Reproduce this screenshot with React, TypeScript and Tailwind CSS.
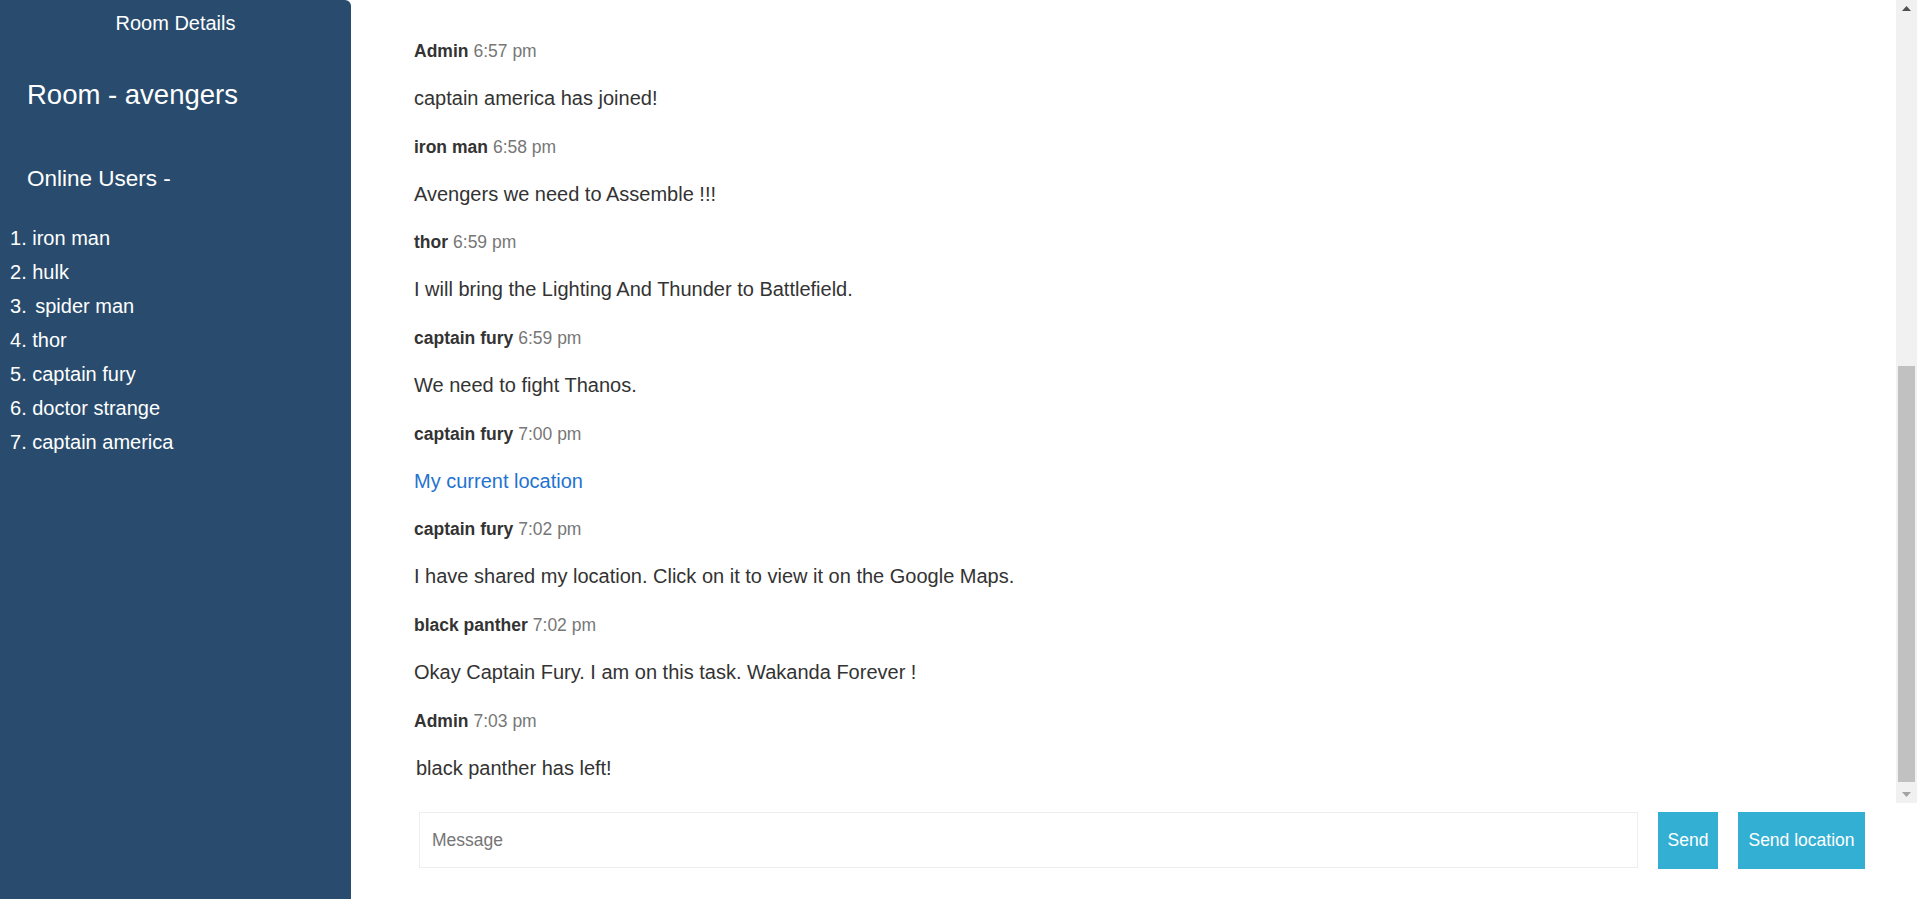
import { useState } from 'react';

const users = ['iron man', 'hulk', 'spider man', 'thor', 'captain fury', 'doctor strange', 'captain america'];

type Msg = { name: string; time: string; text: string; link?: boolean };

const messages: Msg[] = [
  { name: 'Admin', time: '6:57 pm', text: 'captain america has joined!' },
  { name: 'iron man', time: '6:58 pm', text: 'Avengers we need to Assemble !!!' },
  { name: 'thor', time: '6:59 pm', text: 'I will bring the Lighting And Thunder to Battlefield.' },
  { name: 'captain fury', time: '6:59 pm', text: 'We need to fight Thanos.' },
  { name: 'captain fury', time: '7:00 pm', text: 'My current location', link: true },
  { name: 'captain fury', time: '7:02 pm', text: 'I have shared my location. Click on it to view it on the Google Maps.' },
  { name: 'black panther', time: '7:02 pm', text: 'Okay Captain Fury. I am on this task. Wakanda Forever !' },
  { name: 'Admin', time: '7:03 pm', text: 'black panther has left!' },
];

function Sidebar() {
  return (
    <div className="w-[351px] shrink-0 bg-[#294c6e] text-white rounded-tr-[6px]">
      <div className="h-[46px] flex items-center justify-center text-[20px] leading-[24px] rounded-tr-[6px] rounded-br-[3px]">
        Room Details
      </div>
      <h2 className="mt-[33px] pl-[27px] text-[27.5px] leading-[32px]">Room - avengers</h2>
      <h3 className="mt-[54px] pl-[27px] text-[22.5px] leading-[28px]">Online Users -</h3>
      <ol className="mt-[28px] pl-[10px] text-[20px] leading-[34px]">
        {users.map((u, i) => (
          <li key={u}>
            {i + 1}. {i === 2 ? <span className="ml-[3px]">{u}</span> : u}
          </li>
        ))}
      </ol>
    </div>
  );
}

function Scrollbar() {
  return (
    <div className="w-[21px] shrink-0 bg-[#f1f1f1] flex flex-col items-center">
      <div className="h-[17px] flex items-center justify-center">
        <svg width="9" height="5" viewBox="0 0 9 5">
          <polygon points="4.5,0 9,5 0,5" fill="#505050" />
        </svg>
      </div>
      <div className="mt-[349px] w-[17px] h-[416px] bg-[#c1c1c1]" />
      <div className="mt-auto h-[17px] flex items-center justify-center">
        <svg width="9" height="5" viewBox="0 0 9 5">
          <polygon points="0,0 9,0 4.5,5" fill="#a3a3a3" />
        </svg>
      </div>
    </div>
  );
}

export default function App() {
  const [text, setText] = useState('');
  return (
    <div className="h-[899px] w-full flex overflow-hidden bg-white font-['Liberation_Sans',Arial,sans-serif]">
      <Sidebar />
      <div className="flex-1 flex flex-col min-w-0">
        <div className="h-[803px] flex shrink-0">
          <div className="flex-1 pl-[63px] pt-[39px] text-[#333]">
            {messages.map((m, i) => (
              <div key={i} className="mb-[24.7px]">
                <p className="h-[24px] text-[17.5px] leading-[24px]">
                  <span className="font-bold mr-[5px]">{m.name}</span>
                  <span className="text-[#777]">{m.time}</span>
                </p>
                <p className={`mt-[23px] text-[20px] leading-[24px] ${i === messages.length - 1 ? 'ml-[2px]' : ''}`}>
                  {m.link ? (
                    <a href="#" className="text-[#1f73cf]">
                      {m.text}
                    </a>
                  ) : (
                    m.text
                  )}
                </p>
              </div>
            ))}
          </div>
          <Scrollbar />
        </div>
        <div className="flex-1 flex items-start pt-[9px] pl-[68px] pr-[52px] gap-[20px]">
          <input
            value={text}
            onChange={(e) => setText(e.target.value)}
            placeholder="Message"
            className="flex-1 h-[56px] border border-[#eee] px-[12px] text-[17.5px] text-[#333] placeholder:text-[#757575] outline-none"
          />
          <button className="h-[57px] w-[60px] bg-[#34afd4] text-white text-[17.5px]">Send</button>
          <button className="h-[57px] w-[127px] bg-[#34afd4] text-white text-[17.5px]">Send location</button>
        </div>
      </div>
    </div>
  );
}
